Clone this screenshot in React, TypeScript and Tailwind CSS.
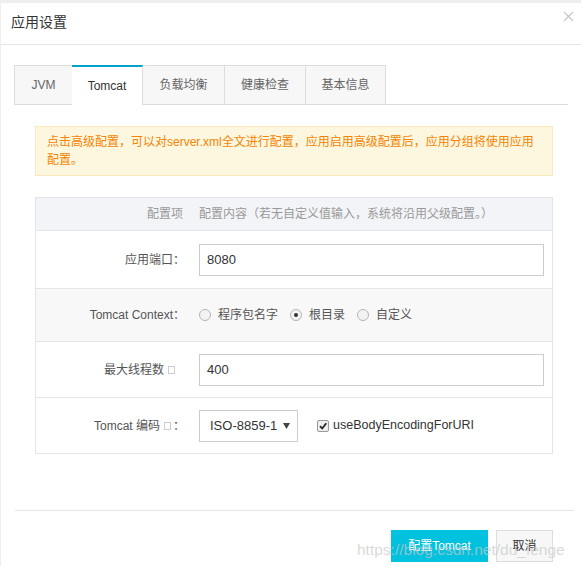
import React from "react";

const font = { fontFamily: '"Liberation Sans", "Noto Sans CJK SC", sans-serif' };

const tabs = ["JVM", "Tomcat", "负载均衡", "健康检查", "基本信息"];
const tabWidths = ["w-[58px]", "w-[71px]", "w-[82px]", "w-[81px]", "w-[80px]"];

const Radio: React.FC<{ checked?: boolean; label: string }> = ({ checked, label }) => (
    <label className="flex items-center mr-[12px]">
        <span className="w-[12px] h-[12px] rounded-full border border-[#b5b5b5] bg-[#f3f3f3] flex items-center justify-center mr-[7px]">
            {checked && <span className="w-[4px] h-[4px] rounded-full bg-[#333]" />}
        </span>
        <span>{label}</span>
    </label>
);

const Row: React.FC<{ label: React.ReactNode; h: string; bg?: string; children: React.ReactNode }> = ({
    label,
    h,
    bg = "bg-white",
    children,
}) => (
    <div className={`flex items-center border-t border-[#e3e5ea] ${h} ${bg}`}>
        <div className="w-[155px] shrink-0 text-right pr-[6px] text-[#555]">{label}</div>
        <div className="flex-1 flex items-center pl-[8px] pr-[8px] text-[#333]">{children}</div>
    </div>
);

const Hint = () => <span className="inline-block w-[7px] h-[8px] border border-[#ccc] ml-[4px] align-middle" />;

const App: React.FC = () => {
    return (
        <div className="w-[581px] h-[566px] bg-[#eeeeee] pt-[3px] pl-[1px] overflow-hidden" style={font}>
            <div className="bg-white h-full relative">
                {/* header */}
                <div className="h-[42px] flex items-center justify-between pl-[10px] pr-[7px] border-b border-[#e5e5e5]">
                    <span className="text-[14px] text-[#333] -mt-[2px]">应用设置</span>
                    <svg width="11" height="11" viewBox="0 0 11 11" className="-mt-[14px]">
                        <path d="M1 1L10 10M10 1L1 10" stroke="#c8c8c8" strokeWidth="1.3" />
                    </svg>
                </div>

                <div className="pt-[20px] px-[13px]">
                    {/* tabs */}
                    <div className="flex border-b border-[#ddd] h-[40px] text-[12px]">
                        {tabs.map((t, i) =>
                            i === 1 ? (
                                <div
                                    key={t}
                                    className={`${tabWidths[i]} h-[40px] bg-white border-t-2 border-[#00a2ca] border-r border-r-[#ddd] flex items-center justify-center text-[#333] -mb-px`}
                                >
                                    {t}
                                </div>
                            ) : (
                                <div
                                    key={t}
                                    className={`${tabWidths[i]} h-[39px] bg-[#f7f7f7] border-t border-[#ddd] ${i === 0 ? "border-l" : ""} ${i !== 0 ? "border-r" : ""} flex items-center justify-center text-[#666]`}
                                >
                                    {t}
                                </div>
                            )
                        )}
                    </div>

                    <div className="ml-[21px] mr-[15px] pt-[21px]">
                        {/* alert */}
                        <div className="bg-[#fdf7e0] border border-[#fbe8bd] px-[11px] py-[6px] text-[12px] leading-[18px] text-[#f68300]">
                            点击高级配置，可以对server.xml全文进行配置，应用启用高级配置后，应用分组将使用应用配置。
                        </div>

                        {/* table */}
                        <div className="mt-[21px] border border-[#e3e5ea] text-[12px]">
                            <div className="flex items-center h-[32px] bg-[#f3f4f7] text-[#999]">
                                <div className="w-[155px] shrink-0 text-right pr-[8px]">配置项</div>
                                <div className="pl-[8px]">配置内容（若无自定义值输入，系统将沿用父级配置。）</div>
                            </div>
                            <Row label="应用端口：" h="h-[58px]">
                                <div className="w-full h-[32px] border border-[#ccc] flex items-center px-[7px] text-[13px]">8080</div>
                            </Row>
                            <Row label="Tomcat Context：" h="h-[53px]" bg="bg-[#f8f8f8]">
                                <div className="flex items-center text-[#555]">
                                    <Radio label="程序包名字" />
                                    <Radio label="根目录" checked />
                                    <Radio label="自定义" />
                                </div>
                            </Row>
                            <Row
                                label={
                                    <>
                                        最大线程数
                                        <Hint />
                                        <span className="inline-block w-[10px]" />
                                    </>
                                }
                                h="h-[56px]"
                            >
                                <div className="w-full h-[32px] border border-[#ccc] flex items-center px-[7px] text-[13px]">400</div>
                            </Row>
                            <Row
                                label={
                                    <>
                                        Tomcat 编码
                                        <Hint />
                                        <span className="ml-[2px]">：</span>
                                    </>
                                }
                                h="h-[56px]"
                            >
                                <div className="w-[99px] h-[32px] border border-[#ccc] flex items-center justify-between pl-[10px] pr-[7px] text-[13px] text-[#333]">
                                    <span>ISO-8859-1</span>
                                    <svg width="7" height="7" viewBox="0 0 7 7">
                                        <path d="M0 1H7L3.5 7Z" fill="#444" />
                                    </svg>
                                </div>
                                <span className="ml-[19px] w-[12px] h-[12px] rounded-[2px] border border-[#999] bg-[#eee] flex items-center justify-center">
                                    <svg width="10" height="10" viewBox="0 0 10 10">
                                        <path d="M2 5.2L4.2 7.5L8.3 2.3" stroke="#222" strokeWidth="1.8" fill="none" />
                                    </svg>
                                </span>
                                <span className="ml-[4px] text-[12.5px] text-[#333]">useBodyEncodingForURI</span>
                            </Row>
                        </div>
                    </div>
                </div>

                {/* footer */}
                <div className="absolute left-[14px] right-[7px] top-[507px] border-t border-[#e5e5e5]" />
                <div className="absolute top-[527px] right-[28px] flex gap-[8px] text-[12px]">
                    <button className="w-[97px] h-[32px] bg-[#00c1de] text-white">配置Tomcat</button>
                    <button className="w-[57px] h-[32px] bg-[#f7f7f7] border border-[#ddd] text-[#333]">取消</button>
                </div>
                <div className="absolute top-[535px] left-[356px] text-[15.5px] text-[#c8c8c8]/70 pointer-events-none whitespace-nowrap">
                    https://blog.csdn.net/du_fenge
                </div>
            </div>
        </div>
    );
};

export default App;
